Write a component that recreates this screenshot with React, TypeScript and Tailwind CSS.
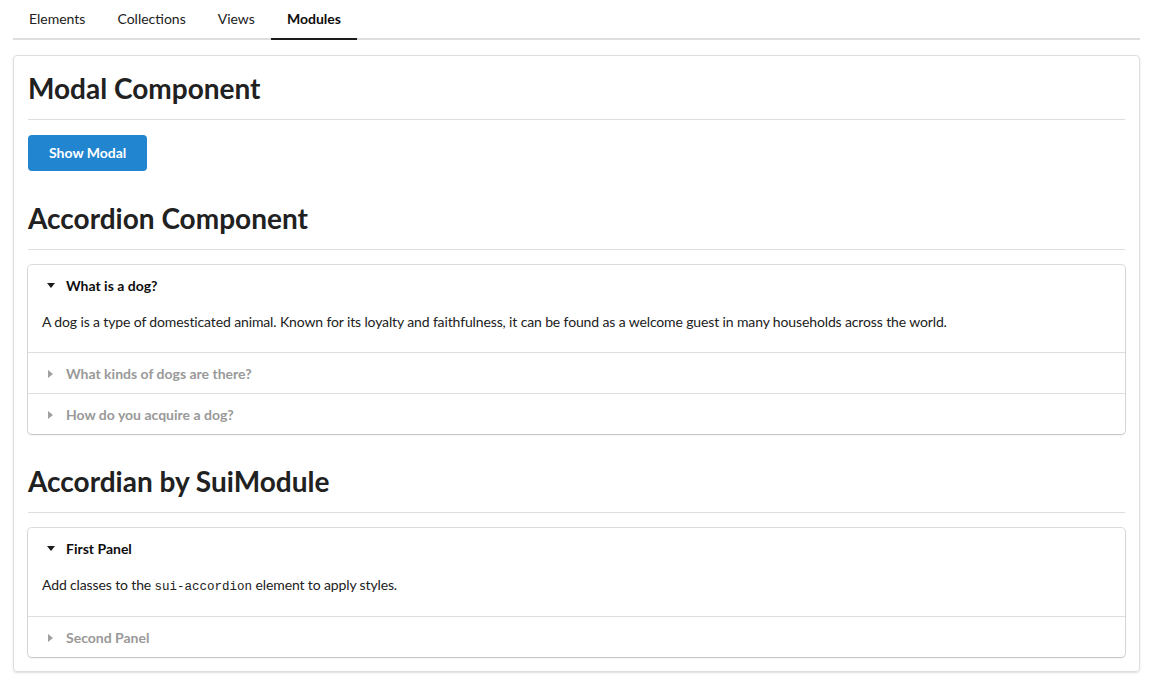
import { useState } from 'react';

type Panel = { title: string; content: React.ReactNode };

const tabs = ['Elements', 'Collections', 'Views', 'Modules'];

const dogPanels: Panel[] = [
  {
    title: 'What is a dog?',
    content:
      'A dog is a type of domesticated animal. Known for its loyalty and faithfulness, it can be found as a welcome guest in many households across the world.',
  },
  { title: 'What kinds of dogs are there?', content: 'There are many breeds of dogs.' },
  { title: 'How do you acquire a dog?', content: 'Three common ways for a prospective owner to acquire a dog.' },
];

const suiPanels: Panel[] = [
  {
    title: 'First Panel',
    content: (
      <>
        Add classes to the{' '}
        <code className="font-['Liberation_Mono',monospace] text-[12.5px] leading-none tracking-normal">
          sui-accordion
        </code>{' '}
        element to apply styles.
      </>
    ),
  },
  { title: 'Second Panel', content: 'Second panel content.' },
];

function Caret({ open }: { open: boolean }) {
  return (
    <span className="w-[17px] flex items-center justify-center shrink-0">
      {open ? (
        <svg width="8" height="5" viewBox="0 0 8 5">
          <polygon points="0,0 8,0 4,5" fill="#1b1c1d" />
        </svg>
      ) : (
        <svg width="5" height="8" viewBox="0 0 5 8">
          <polygon points="0,0 5,4 0,8" fill="#a0a0a0" />
        </svg>
      )}
    </span>
  );
}

function Accordion({ panels, contentHeight = 'h-[47px]' }: { panels: Panel[]; contentHeight?: string }) {
  const [active, setActive] = useState(0);

  return (
    <div className="rounded-[4px] bg-white shadow-[0_1px_2px_0_rgba(34,36,38,0.15),0_0_0_1px_rgba(34,36,38,0.15)]">
      {panels.map((panel, i) => (
        <div key={panel.title} className={i > 0 ? 'border-t border-[#dededf]' : ''}>
          <button
            onClick={() => setActive(active === i ? -1 : i)}
            className={`w-full flex items-center pl-[14px] pt-[1px] h-[40px] text-[14px] leading-[20px] font-bold text-left ${
              active === i ? 'text-[#0d0d0d]' : 'text-[#999999]'
            }`}
          >
            <Caret open={active === i} />
            <span className="ml-[7px]">{panel.title}</span>
          </button>
          {active === i && (
            <div
              className={`${contentHeight} px-[14px] pt-[7px] text-[14px] leading-[20px] tracking-[-0.13px] text-[#212121]`}
            >
              {panel.content}
            </div>
          )}
        </div>
      ))}
    </div>
  );
}

function DividingHeader({ children, first }: { children: React.ReactNode; first?: boolean }) {
  return (
    <h2
      className={`text-[28px] leading-[36px] font-bold text-[#212121] pb-[13px] border-b border-[#dededf] mb-[15px] ${
        first ? '' : 'mt-[29px]'
      }`}
    >
      {children}
    </h2>
  );
}

export default function App() {
  const [activeTab, setActiveTab] = useState('Modules');

  return (
    <div className="min-h-screen bg-white font-['Lato','Liberation_Sans',sans-serif] text-[#212121]">
      <div className="ml-[13px] w-[1127px]">
        {/* Tab menu */}
        <div className="flex border-b-2 border-[#dededf]">
          {tabs.map((tab) => (
            <button
              key={tab}
              onClick={() => setActiveTab(tab)}
              className={`px-[16px] pt-[12px] pb-[12px] -mb-[2px] border-b-2 text-[14px] leading-[14px] ${
                activeTab === tab
                  ? 'border-[#1b1c1d] font-bold text-[#0d0d0d]'
                  : 'border-transparent text-[#212121]'
              }`}
            >
              {tab}
            </button>
          ))}
        </div>

        {/* Segment */}
        <div className="mt-[15px] border border-[#dededf] rounded-[4px] shadow-[0_1px_2px_0_rgba(34,36,38,0.15)] px-[14px] pt-[14px] pb-[14px]">
          <DividingHeader first>Modal Component</DividingHeader>
          <button className="bg-[#2185d0] text-white font-bold text-[14px] leading-[14px] px-[21px] py-[11px] rounded-[4px]">
            Show Modal
          </button>

          <DividingHeader>Accordion Component</DividingHeader>
          <Accordion panels={dogPanels} />

          <DividingHeader>Accordian by SuiModule</DividingHeader>
          <Accordion panels={suiPanels} contentHeight="h-[48px]" />
        </div>
      </div>
    </div>
  );
}
